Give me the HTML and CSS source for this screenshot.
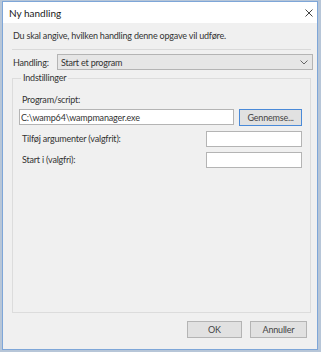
FILE: index.html
```html
<!DOCTYPE html>
<html lang="da">
<head>
    <meta charset="UTF-8">
    <title>Ny handling</title>
    <link rel="stylesheet" href="styles.css">
</head>
<body>
	<div class="window">
		<div class="titlebar">
			<span class="title">Ny handling</span>
			<svg class="close" width="10" height="10" viewBox="0 0 10 10">
				<path d="M1.5 1.5 L8.5 8.5 M8.5 1.5 L1.5 8.5" stroke="#444" stroke-width="1" fill="none"/>
			</svg>
		</div>
		<div class="content">
			<p class="intro">Du skal angive, hvilken handling denne opgave vil udføre.</p>
			<div class="sep"></div>
			<div class="actionRow">
				<label class="actionLabel">Handling:</label>
				<div class="select">
					<span>Start et program</span>
					<svg width="8" height="5" viewBox="0 0 8 5">
						<path d="M0.5 0.5 L4 4 L7.5 0.5" stroke="#666" stroke-width="1" fill="none"/>
					</svg>
				</div>
			</div>
			<fieldset class="group">
				<legend>Indstillinger</legend>
				<label class="label first">Program/script:</label>
				<div class="programRow">
					<input type="text" class="input wide" value="C:\wamp64\wampmanager.exe" />
					<button type="button" class="btn browse">Gennemse...</button>
				</div>
				<div class="optRow">
					<label class="label">Tilføj argumenter (valgfrit):</label>
					<input type="text" class="input small" value="" />
				</div>
				<div class="optRow">
					<label class="label">Start i (valgfri):</label>
					<input type="text" class="input small" value="" />
				</div>
			</fieldset>
			<div class="buttons">
				<button type="button" class="btn ok">OK</button>
				<button type="button" class="btn cancel">Annuller</button>
			</div>
		</div>
	</div>
</body>
</html>
```
FILE: styles.css
```css
body {
  margin: 0;
  background: #b7c6d8;
  font-family: Lato, "Open Sans", sans-serif;
  font-size: 9px;
  letter-spacing: -0.2px;
  color: #333;
}
.window {
  margin: 1px 0 0 2px;
  width: 314px;
  height: 347px;
  border: 1px solid #7ea6d8;
  background: #f0f0f0;
  display: flex;
  flex-direction: column;
}
.titlebar {
  height: 20px;
  background: #fff;
  display: flex;
  align-items: center;
  justify-content: space-between;
  padding: 1px 3px 0 6px;
}
.title {
  font-size: 10px;
  letter-spacing: 0;
  color: #1a1a1a;
}
.content {
  flex: 1;
  display: flex;
  flex-direction: column;
  padding: 0 4px 11px 9px;
}
.intro {
  margin: 6px 0 0 1px;
  line-height: 14px;
}
.sep {
  height: 1px;
  background: #d9d9d9;
  margin: 6px 2px 0 0;
}
.actionRow {
  display: flex;
  align-items: center;
  margin-top: 4px;
  height: 16px;
}
.actionLabel {
  flex: none;
  width: 44px;
  padding-left: 1px;
}
.select {
  flex: 1;
  height: 14px;
  border: 1px solid #b4b4b4;
  background: #e6e6e6;
  display: flex;
  align-items: center;
  justify-content: space-between;
  padding: 0 4px 0 3px;
}
.group {
  flex: 1;
  margin: 1px 2px 0 0;
  border: 1px solid #dcdcdc;
  padding: 8px 8px 0 6px;
  min-width: 0;
}
.group legend {
  padding: 0 2px;
  margin-left: 2px;
  line-height: 14px;
}
.label {
  display: block;
  line-height: 14px;
  margin-left: 3px;
}
.programRow {
  display: flex;
  gap: 5px;
  margin-top: 2px;
}
.input {
  box-sizing: border-box;
  height: 16px;
  border: 1px solid #b4b4b4;
  background: #fff;
  font-family: inherit;
  font-size: 9px;
  letter-spacing: -0.2px;
  color: #333;
  padding: 0 1px;
  outline: none;
}
.wide {
  width: 216px;
}
.small {
  width: 96px;
}
.optRow {
  display: flex;
  justify-content: space-between;
  align-items: center;
  margin-top: 5px;
}
.btn {
  box-sizing: border-box;
  height: 17px;
  border: 1px solid #b4b4b4;
  background: #e1e1e1;
  font-family: inherit;
  font-size: 9px;
  letter-spacing: -0.2px;
  color: #444;
  padding: 0;
}
.browse {
  width: 63px;
  border-color: #4a8ad8;
}
.buttons {
  display: flex;
  justify-content: flex-end;
  gap: 8px;
  margin-top: 8px;
  padding-right: 6px;
}
.ok {
  width: 55px;
}
.cancel {
  width: 57px;
}
```
